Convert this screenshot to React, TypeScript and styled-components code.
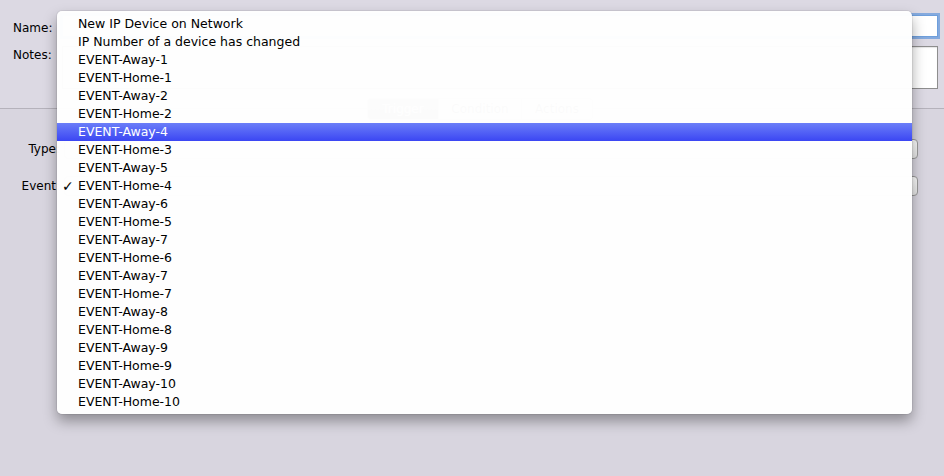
import React from 'react';
import styled, { createGlobalStyle } from 'styled-components';

const GlobalStyle = createGlobalStyle`
  html, body {
    margin: 0;
    padding: 0;
    background: #d8d5df;
  }
  body {
    font-family: 'Lucida Grande', 'DejaVu Sans', sans-serif;
    font-size: 12px;
    color: #000;
  }
`;

const Window = styled.div`
  position: relative;
  width: 944px;
  height: 476px;
  overflow: hidden;
  background: #d8d5df;
`;

const Header = styled.div`
  display: flex;
  flex-direction: column;
  gap: 9px;
  height: 108px;
  box-sizing: border-box;
  padding: 15px 6px 0 13px;
  background: #dcd9e3;
`;

const FieldRow = styled.div`
  display: flex;
  align-items: flex-start;
`;

const FieldLabel = styled.label<{ $offset: number }>`
  width: 49px;
  padding-top: ${({ $offset }) => $offset}px;
  font-size: 12px;
`;

const TextInput = styled.div<{ $focused?: boolean }>`
  flex: 1;
  height: ${({ $focused }) => ($focused ? '22px' : '43px')};
  box-sizing: border-box;
  background: #fff;
  border: 1px solid ${({ $focused }) => ($focused ? '#6e9fdc' : '#8e8e8e')};
  box-shadow: ${({ $focused }) =>
    $focused ? '0 0 0 2px rgba(104, 154, 220, 0.75)' : 'inset 0 1px 1px rgba(0,0,0,0.1)'};
`;

const TabView = styled.div`
  border-top: 1px solid #b5b2bb;
  display: flex;
  flex-direction: column;
  padding: 0 26px 0 0;
`;

const TabBar = styled.div`
  display: flex;
  align-self: center;
  margin: -11px 0 0 42px;
  height: 20px;
  border-radius: 4px;
  background: #f4f4f4;
  border: 1px solid #a6a6a6;
  overflow: hidden;
`;

const Tab = styled.div<{ $active?: boolean; $w: number }>`
  width: ${({ $w }) => $w}px;
  display: flex;
  align-items: center;
  justify-content: center;
  font-size: 12px;
  color: ${({ $active }) => ($active ? '#fff' : '#222')};
  background: ${({ $active }) => ($active ? 'linear-gradient(#7a7a7a, #555)' : 'transparent')};
  & + & {
    border-left: 1px solid #b0b0b0;
  }
`;

const Form = styled.div`
  display: flex;
  flex-direction: column;
  gap: 17px;
  margin-top: 19px;
`;

const PopupRow = styled.div`
  display: flex;
  align-items: center;
`;

const PopupLabel = styled.span`
  width: 60px;
  text-align: right;
  font-size: 12px;
`;

const Popup = styled.div`
  flex: 1;
  height: 20px;
  box-sizing: border-box;
  margin-left: 4px;
  border: 1px solid #9a9a9a;
  border-radius: 4px;
  background: linear-gradient(#fdfdfd, #e6e6e6);
`;

const Menu = styled.ul`
  position: absolute;
  left: 57px;
  top: 11px;
  width: 855px;
  margin: 0;
  padding: 4px 0 3px;
  list-style: none;
  background: rgba(254, 254, 254, 0.985);
  border-radius: 5px;
  box-shadow: 0 0 0 1px rgba(0, 0, 0, 0.06), 0 7px 14px rgba(0, 0, 0, 0.35);
`;

const MenuItem = styled.li<{ $selected?: boolean }>`
  position: relative;
  height: 18px;
  line-height: 18px;
  padding-left: 21px;
  font-size: 12.5px;
  white-space: nowrap;
  color: ${({ $selected }) => ($selected ? '#fff' : '#000')};
  background: ${({ $selected }) =>
    $selected ? 'linear-gradient(#6b7ef8, #3b46f3)' : 'transparent'};
`;

const Check = styled.span`
  position: absolute;
  left: 5px;
  top: 0;
  font-size: 14px;
  font-weight: bold;
`;

const items = [
  'New IP Device on Network',
  'IP Number of a device has changed',
  'EVENT-Away-1',
  'EVENT-Home-1',
  'EVENT-Away-2',
  'EVENT-Home-2',
  'EVENT-Away-4',
  'EVENT-Home-3',
  'EVENT-Away-5',
  'EVENT-Home-4',
  'EVENT-Away-6',
  'EVENT-Home-5',
  'EVENT-Away-7',
  'EVENT-Home-6',
  'EVENT-Away-7',
  'EVENT-Home-7',
  'EVENT-Away-8',
  'EVENT-Home-8',
  'EVENT-Away-9',
  'EVENT-Home-9',
  'EVENT-Away-10',
  'EVENT-Home-10',
];

const highlighted = 6;
const checked = 9;

const App = () => (
  <>
    <GlobalStyle />
    <Window>
      <Header>
        <FieldRow>
          <FieldLabel $offset={6}>Name:</FieldLabel>
          <TextInput $focused />
        </FieldRow>
        <FieldRow>
          <FieldLabel $offset={2}>Notes:</FieldLabel>
          <TextInput />
        </FieldRow>
      </Header>
      <TabView>
        <TabBar>
          <Tab $active $w={70}>Trigger</Tab>
          <Tab $w={82}>Condition</Tab>
          <Tab $w={70}>Actions</Tab>
        </TabBar>
        <Form>
          <PopupRow>
            <PopupLabel>Type:</PopupLabel>
            <Popup />
          </PopupRow>
          <PopupRow>
            <PopupLabel>Event:</PopupLabel>
            <Popup />
          </PopupRow>
        </Form>
      </TabView>
      <Menu>
        {items.map((text, i) => (
          <MenuItem key={i} $selected={i === highlighted}>
            {i === checked && <Check>✓</Check>}
            {text}
          </MenuItem>
        ))}
      </Menu>
    </Window>
  </>
);

export default App;
